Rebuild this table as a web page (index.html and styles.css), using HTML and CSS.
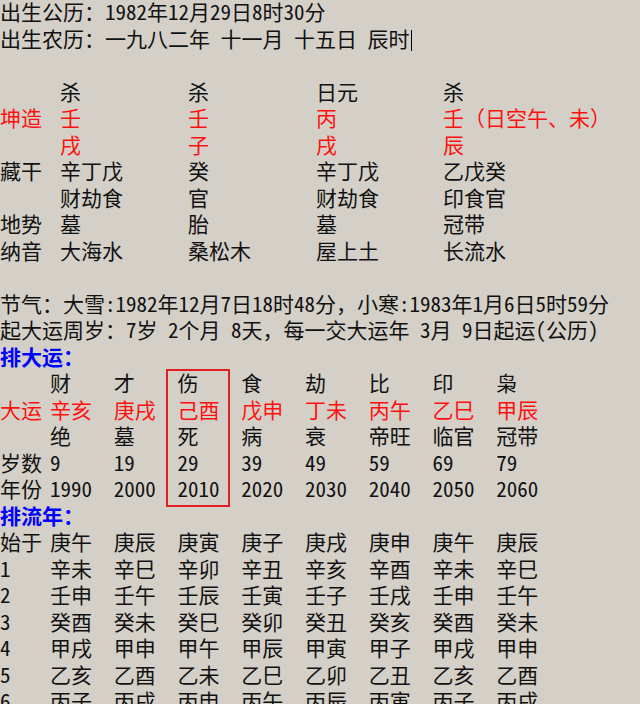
FILE: index.html
```html
<!DOCTYPE html>
<html lang="zh-CN">
<head>
<meta charset="utf-8">
<title>排盘</title>
<link rel="stylesheet" href="styles.css">
</head>
<body>
<div class="page">
  <div class="line">出生公历：1982年12月29日8时30分</div>
  <div class="line">出生农历：一九八二年 十一月 十五日 辰时<span class="caret"></span></div>
  <div class="line"></div>

  <div class="pillars">
    <span></span><span>杀</span><span>杀</span><span>日元</span><span>杀</span>
    <span class="red">坤造</span><span class="red">壬</span><span class="red">壬</span><span class="red">丙</span><span class="red">壬（日空午、未）</span>
    <span></span><span class="red">戌</span><span class="red">子</span><span class="red">戌</span><span class="red">辰</span>
    <span>藏干</span><span>辛丁戊</span><span>癸</span><span>辛丁戊</span><span>乙戊癸</span>
    <span></span><span>财劫食</span><span>官</span><span>财劫食</span><span>印食官</span>
    <span>地势</span><span>墓</span><span>胎</span><span>墓</span><span>冠带</span>
    <span>纳音</span><span>大海水</span><span>桑松木</span><span>屋上土</span><span>长流水</span>
  </div>

  <div class="line"></div>
  <div class="line">节气：大雪:1982年12月7日18时48分，小寒:1983年1月6日5时59分</div>
  <div class="line">起大运周岁：7岁 2个月 8天，每一交大运年 3月 9日起运(公历)</div>
  <div class="line heading">排大运：</div>

  <div class="table">
    <span></span><span>财</span><span>才</span><span>伤</span><span>食</span><span>劫</span><span>比</span><span>印</span><span>枭</span>
    <span class="red">大运</span><span class="red">辛亥</span><span class="red">庚戌</span><span class="red">己酉</span><span class="red">戊申</span><span class="red">丁未</span><span class="red">丙午</span><span class="red">乙巳</span><span class="red">甲辰</span>
    <span></span><span>绝</span><span>墓</span><span>死</span><span>病</span><span>衰</span><span>帝旺</span><span>临官</span><span>冠带</span>
    <span>岁数</span><span>9</span><span>19</span><span>29</span><span>39</span><span>49</span><span>59</span><span>69</span><span>79</span>
    <span>年份</span><span>1990</span><span>2000</span><span>2010</span><span>2020</span><span>2030</span><span>2040</span><span>2050</span><span>2060</span>
  </div>

  <div class="line heading">排流年：</div>

  <div class="table">
    <span>始于</span><span>庚午</span><span>庚辰</span><span>庚寅</span><span>庚子</span><span>庚戌</span><span>庚申</span><span>庚午</span><span>庚辰</span>
    <span>1</span><span>辛未</span><span>辛巳</span><span>辛卯</span><span>辛丑</span><span>辛亥</span><span>辛酉</span><span>辛未</span><span>辛巳</span>
    <span>2</span><span>壬申</span><span>壬午</span><span>壬辰</span><span>壬寅</span><span>壬子</span><span>壬戌</span><span>壬申</span><span>壬午</span>
    <span>3</span><span>癸酉</span><span>癸未</span><span>癸巳</span><span>癸卯</span><span>癸丑</span><span>癸亥</span><span>癸酉</span><span>癸未</span>
    <span>4</span><span>甲戌</span><span>甲申</span><span>甲午</span><span>甲辰</span><span>甲寅</span><span>甲子</span><span>甲戌</span><span>甲申</span>
    <span>5</span><span>乙亥</span><span>乙酉</span><span>乙未</span><span>乙巳</span><span>乙卯</span><span>乙丑</span><span>乙亥</span><span>乙酉</span>
    <span>6</span><span>丙子</span><span>丙戌</span><span>丙申</span><span>丙午</span><span>丙辰</span><span>丙寅</span><span>丙子</span><span>丙戌</span>
  </div>

  <div class="mark"></div>
</div>
</body>
</html>
```

FILE: styles.css
```css
html, body {
  margin: 0;
  padding: 0;
  height: 100%;
  overflow: hidden;
  background: #d4d0c8;
}

.page {
  position: relative;
  margin-top: -2px;
  font-family: "Noto Sans Mono CJK SC", "Noto Sans CJK SC", sans-serif;
  font-size: 21px;
  line-height: 26.5px;
  color: #111;
}

.line {
  height: 26.5px;
  white-space: pre;
}

.caret {
  display: inline-block;
  width: 0;
  height: 21px;
  border-left: 1px solid #000;
  vertical-align: -4px;
  margin-left: 1px;
}

.red {
  color: #ff1010;
}

.heading {
  color: #0000ff;
  font-weight: bold;
}

.pillars {
  display: grid;
  grid-template-columns: 60px 128px 128px 127px auto;
  grid-auto-rows: 26.5px;
  white-space: nowrap;
}

.table {
  display: grid;
  grid-template-columns: 50px repeat(8, 63.75px);
  grid-auto-rows: 26.5px;
  white-space: nowrap;
}

.mark {
  position: absolute;
  left: 166px;
  top: 371px;
  width: 60px;
  height: 134px;
  border: 2px solid #e02020;
}
```
